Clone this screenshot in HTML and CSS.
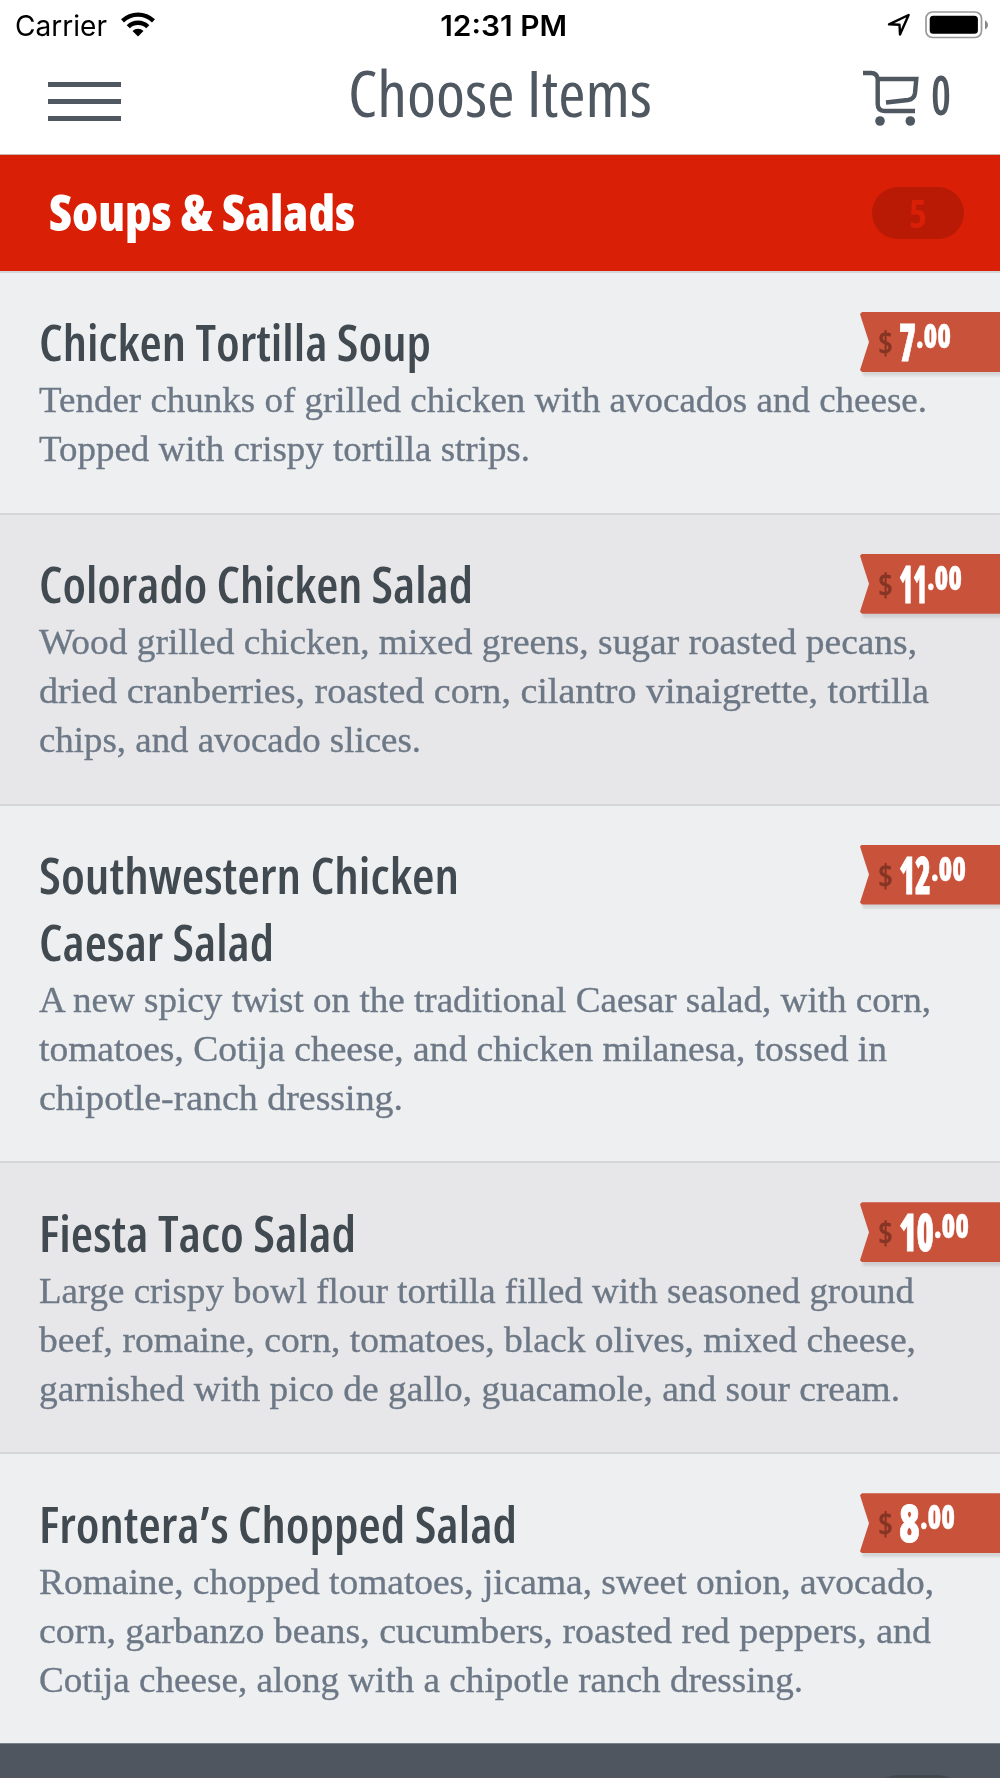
FILE: index.html
```html
<!DOCTYPE html>
<html lang="en">
<head>
    <meta charset="UTF-8">
    <meta name="viewport" content="width=device-width, initial-scale=1.0">
    <title>Choose Items</title>
    <link rel="stylesheet" href="styles.css">
</head>
<body>
    <div class="status-bar">
        <div class="status-left">
            <span class="carrier" data-width="92">Carrier</span>
            <svg class="wifi" width="34" height="25" viewBox="0 0 34 25">
                <path d="M0 7.3a24.5 24.5 0 0 1 34 0l-3 3.2a20 20 0 0 0-28 0z"/>
                <path d="M5.7 13.2a16.2 16.2 0 0 1 22.6 0l-3.1 3.1a11.8 11.8 0 0 0-16.4 0z"/>
                <path d="M11.5 19a8 8 0 0 1 11 0L17 24.6z"/>
            </svg>
        </div>
        <span class="clock" data-width="129">12:31 PM</span>
        <div class="status-right">
            <svg width="24" height="24" viewBox="0 0 24 24">
                <path d="M2 11.3L21.6 2 13 21.4l-.5-9.7z" fill="none" stroke="#000" stroke-width="2.4" stroke-linejoin="round"/>
            </svg>
            <svg width="64" height="28" viewBox="0 0 64 28">
                <rect x="1" y="1" width="55.5" height="25.5" rx="6.5" fill="none" stroke="#999" stroke-width="1.7"/>
                <rect x="4.7" y="4.8" width="48.2" height="18" rx="3.5"/>
                <path d="M60 9.2c4 2.5 4 6.8 0 9.3z" fill="#888"/>
            </svg>
        </div>
    </div>

    <header class="navbar">
        <button class="menu-button" aria-label="Menu">
            <span></span>
            <span></span>
            <span></span>
        </button>
        <h1 data-width="304">Choose Items</h1>
        <div class="cart">
            <svg width="57" height="57" viewBox="0 0 57 57">
                <g fill="none" stroke="#4f5860" stroke-width="4.4">
                    <path d="M0 3h8q6 0 6.700 6v25q0 7 7 7H52"/>
                    <path d="M15 9H53.300L52 23q-.7 6-7 7L23 32.500"/>
                </g>
                <circle cx="17" cy="51" r="4.800" fill="#4f5860"/>
                <circle cx="47.300" cy="51" r="4.800" fill="#4f5860"/>
            </svg>
            <span class="cart-count" data-width="20">0</span>
        </div>
    </header>

    <section class="category">
        <h2 data-width="306">Soups &amp; Salads</h2>
        <div class="badge"><span data-width="18">5</span></div>
    </section>

    <ul class="menu">
        <li class="item">
            <h3><span data-width="392">Chicken Tortilla Soup</span></h3>
            <p>
                <span data-width="888">Tender chunks of grilled chicken with avocados and cheese.</span>
                <span data-width="491">Topped with crispy tortilla strips.</span>
            </p>
            <div class="price"><span class="dollar" data-width="15">$</span><span class="whole" data-width="17">7</span><span class="cents" data-width="35">.00</span></div>
        </li>
        <li class="item">
            <h3><span data-width="434">Colorado Chicken Salad</span></h3>
            <p>
                <span data-width="878">Wood grilled chicken, mixed greens, sugar roasted pecans,</span>
                <span data-width="890">dried cranberries, roasted corn, cilantro vinaigrette, tortilla</span>
                <span data-width="382">chips, and avocado slices.</span>
            </p>
            <div class="price"><span class="dollar" data-width="15">$</span><span class="whole" data-width="28">11</span><span class="cents" data-width="35">.00</span></div>
        </li>
        <li class="item">
            <h3>
                <span data-width="420">Southwestern Chicken</span>
                <span data-width="235">Caesar Salad</span>
            </h3>
            <p>
                <span data-width="892">A new spicy twist on the traditional Caesar salad, with corn,</span>
                <span data-width="848">tomatoes, Cotija cheese, and chicken milanesa, tossed in</span>
                <span data-width="364">chipotle-ranch dressing.</span>
            </p>
            <div class="price"><span class="dollar" data-width="15">$</span><span class="whole" data-width="32">12</span><span class="cents" data-width="35">.00</span></div>
        </li>
        <li class="item">
            <h3><span data-width="317">Fiesta Taco Salad</span></h3>
            <p>
                <span data-width="875">Large crispy bowl flour tortilla filled with seasoned ground</span>
                <span data-width="877">beef, romaine, corn, tomatoes, black olives, mixed cheese,</span>
                <span data-width="861">garnished with pico de gallo, guacamole, and sour cream.</span>
            </p>
            <div class="price"><span class="dollar" data-width="15">$</span><span class="whole" data-width="35">10</span><span class="cents" data-width="35">.00</span></div>
        </li>
        <li class="item">
            <h3><span data-width="478">Frontera’s Chopped Salad</span></h3>
            <p>
                <span data-width="895">Romaine, chopped tomatoes, jicama, sweet onion, avocado,</span>
                <span data-width="892">corn, garbanzo beans, cucumbers, roasted red peppers, and</span>
                <span data-width="764">Cotija cheese, along with a chipotle ranch dressing.</span>
            </p>
            <div class="price"><span class="dollar" data-width="15">$</span><span class="whole" data-width="21">8</span><span class="cents" data-width="35">.00</span></div>
        </li>
    </ul>

    <section class="category category-next">
        <div class="badge"></div>
    </section>
    <script src="script.js"></script>
</body>
</html>
```
FILE: styles.css
```css
:root {
    --red: #d91f06;
    --slate: #4f5860;
    --ribbon: #c9523a;
    --condensed: 'Open Sans', 'Noto Sans', sans-serif;
}

* {
    box-sizing: border-box;
}

body {
    margin: 0;
    height: 1778px;
    overflow: hidden;
    background-color: #fff;
    font-family: var(--condensed);
    font-stretch: 75%;
}

h1, h2, h3, p, ul {
    margin: 0;
    padding: 0;
}

/* text runs are squeezed to data-width by script.js */
[data-width] {
    display: block;
    width: max-content;
    white-space: nowrap;
    transform-origin: left center;
}

/* status bar */
.status-bar {
    display: grid;
    grid-template-columns: 1fr auto 1fr;
    align-items: center;
    height: 50px;
    padding: 1px 11px 0 15px;
    font-family: Inter, sans-serif;
    font-stretch: 100%;
    font-size: 28px;
    color: #000;
}

.status-left, .status-right {
    display: flex;
    align-items: center;
}

.status-left {
    gap: 14px;
}

.status-left svg, .status-right svg {
    margin-bottom: 2px;
}

.status-right {
    justify-content: flex-end;
    gap: 14px;
}

.clock {
    padding-left: 2px;
    font-weight: 600;
}

/* navbar */
.navbar {
    display: grid;
    grid-template-columns: 1fr auto 1fr;
    height: 105px;
    padding: 0 49px 0 48px;
    border-bottom: 1px solid #c9b4b0;
    color: var(--slate);
}

.menu-button {
    display: flex;
    flex-direction: column;
    gap: 12px;
    width: 73px;
    margin-top: 32px;
    padding: 0;
    border: none;
    background: none;
}

.menu-button span {
    width: 73px;
    height: 5px;
    background-color: var(--slate);
}

.navbar h1 {
    font-size: 64px;
    font-weight: 400;
    line-height: 86px;
}

.cart {
    display: flex;
    justify-content: flex-end;
    gap: 11px;
    padding-top: 20px;
}

.cart-count {
    font-size: 54px;
    font-weight: 600;
    line-height: 48px;
}

/* category header */
.category {
    display: flex;
    justify-content: space-between;
    align-items: center;
    height: 116px;
    padding: 0 36px 0 49px;
    background-color: var(--red);
    color: #fff;
}

.category h2 {
    padding-bottom: 2px;
    font-size: 50px;
    font-weight: 800;
    line-height: 68px;
}

.badge {
    display: flex;
    justify-content: center;
    align-items: center;
    width: 92px;
    height: 52px;
    border-radius: 26px;
    background-color: #b91a06;
    color: var(--red);
    font-size: 39px;
    font-weight: 700;
    line-height: 52px;
}

.category-next {
    justify-content: flex-end;
    border-top: 1px solid #77828a;
    background-color: #4f565f;
}

.category-next .badge {
    background-color: #45494f;
}

/* menu items */
.menu {
    list-style: none;
}

.item {
    position: relative;
    padding: 36.4px 39px 38.4px;
    border-top: 2px solid #d5d6d8;
    background-color: #eeeff1;
}

.item:nth-child(even) {
    background-color: #e7e7e9;
}

.item h3 {
    font-size: 50px;
    font-weight: 600;
    line-height: 67px;
    color: #414a50;
}

.item p {
    font-family: 'Liberation Serif', serif;
    font-stretch: 100%;
    font-size: 36px;
    line-height: 49px;
    color: #6d7886;
    -webkit-text-stroke: 0.35px #6d7886;
}

/* price ribbon */
.price {
    position: absolute;
    top: 39px;
    right: 0;
    display: flex;
    width: 140px;
    height: 60px;
    padding-left: 18px;
    color: #fff;
    font-weight: 800;
    filter: drop-shadow(2px 4px 1px rgba(0, 0, 0, 0.1));
}

.price::before {
    content: '';
    position: absolute;
    inset: 0;
    z-index: -1;
    background-color: var(--ribbon);
    clip-path: polygon(2px 0, 100% 0, 100% 100%, 2px 100%, 0 58px, 9px 50%, 0 2px);
}

.dollar {
    margin-right: 6px;
    font-size: 32px;
    font-weight: 700;
    line-height: 61px;
    color: #863524;
}

.whole {
    font-size: 51px;
    line-height: 59px;
    -webkit-text-stroke: 0.8px #fff;
}

.cents {
    font-size: 33px;
    line-height: 48px;
    -webkit-text-stroke: 0.4px #fff;
}
```
FILE: script.js
```js
document.querySelectorAll('[data-width]').forEach(function (el) {
    const target = Number(el.dataset.width);
    const natural = el.getBoundingClientRect().width;
    el.style.transform = 'scaleX(' + target / natural + ')';
    el.style.marginRight = (parseFloat(getComputedStyle(el).marginRight) + target - natural) + 'px';
});
```
